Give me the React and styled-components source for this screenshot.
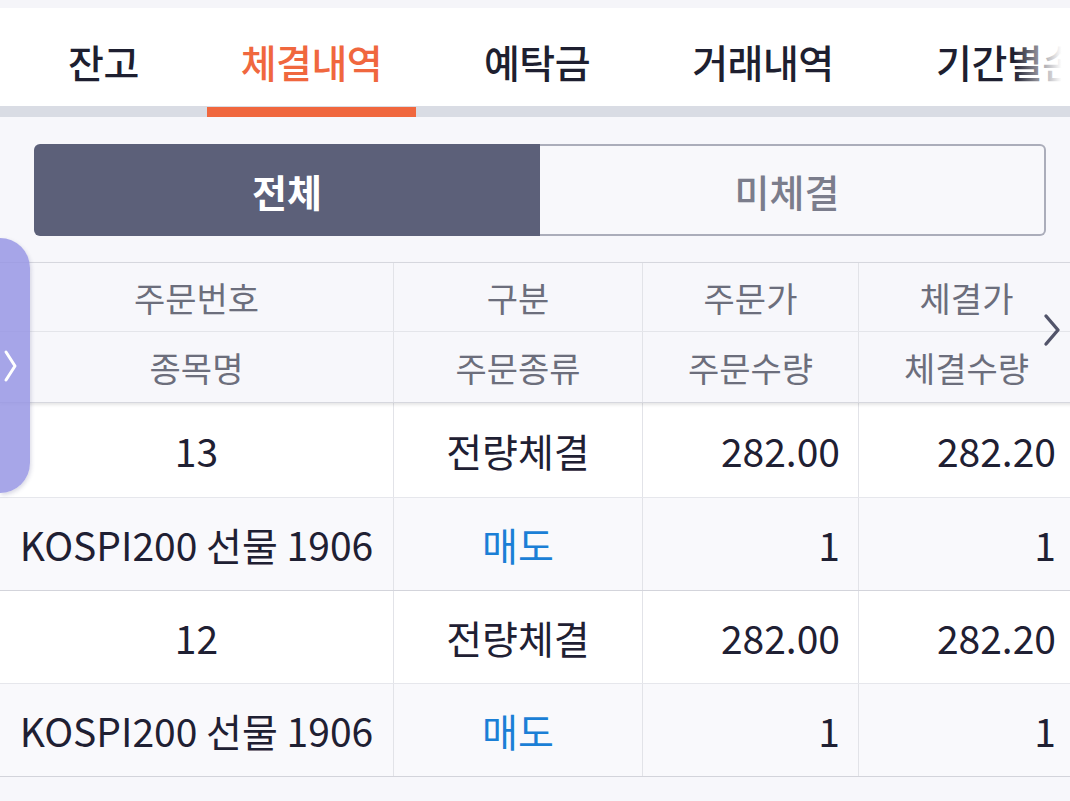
import React from 'react';
import styled, { createGlobalStyle } from 'styled-components';

const GlobalStyle = createGlobalStyle`
  html, body {
    margin: 0;
    padding: 0;
    background: #f7f7fb;
    font-family: "Noto Sans CJK KR", "Noto Sans", sans-serif;
    overflow: hidden;
  }
`;

const tabs = [
  { label: '잔고', width: 207 },
  { label: '체결내역', width: 209, active: true },
  { label: '예탁금', width: 242 },
  { label: '거래내역', width: 210 },
  { label: '기간별손익', width: 260, pad: 68 },
];

const rows = [
  { no: '13', kind: '전량체결', price: '282.00', fill: '282.20', name: 'KOSPI200 선물 1906', side: '매도', qty: '1', fqty: '1' },
  { no: '12', kind: '전량체결', price: '282.00', fill: '282.20', name: 'KOSPI200 선물 1906', side: '매도', qty: '1', fqty: '1' },
];

const COLS = '394px 249px 216px 216px';

const App = () => {
  return (
    <Page>
      <GlobalStyle />
      <TopGap />
      <TabBar>
        {tabs.map((t) => (
          <Tab key={t.label} $width={t.width} $active={t.active} $pad={t.pad}>
            {t.label}
          </Tab>
        ))}
        <Fade />
      </TabBar>
      <TabTrack>
        <Underline />
      </TabTrack>

      <SegmentWrap>
        <Segment>
          <SegBtn $active>전체</SegBtn>
          <SegBtn>미체결</SegBtn>
        </Segment>
      </SegmentWrap>

      <TableArea>
        <SideHandle>
          <svg width="18" height="36" viewBox="0 0 18 36">
            <path d="M6 4 L15 18 L6 32" fill="none" stroke="#fff" strokeWidth="3" strokeLinecap="round" strokeLinejoin="round" />
          </svg>
        </SideHandle>
        <NextArrow>
          <svg width="20" height="36" viewBox="0 0 20 36">
            <path d="M4 4 L16 18 L4 32" fill="none" stroke="#52546a" strokeWidth="3.4" strokeLinecap="round" strokeLinejoin="round" />
          </svg>
        </NextArrow>
        <Table>
          <Head>
            <HeadRow>
              <HeadCell>주문번호</HeadCell>
              <HeadCell>구분</HeadCell>
              <HeadCell>주문가</HeadCell>
              <HeadCell>체결가</HeadCell>
            </HeadRow>
            <HeadRow $last>
              <HeadCell>종목명</HeadCell>
              <HeadCell>주문종류</HeadCell>
              <HeadCell>주문수량</HeadCell>
              <HeadCell>체결수량</HeadCell>
            </HeadRow>
          </Head>
          {rows.map((r, i) => (
            <Group key={i}>
              <Row $bg="#ffffff" $h={i === 0 ? 95 : 93}>
                <Cell>{r.no}</Cell>
                <Cell>{r.kind}</Cell>
                <Cell $align="right">{r.price}</Cell>
                <Cell $align="right">{r.fill}</Cell>
              </Row>
              <Row $bg="#f9f9fc" $h={93} $end>
                <Cell>{r.name}</Cell>
                <Cell $color="#1b7fd6">{r.side}</Cell>
                <Cell $align="right">{r.qty}</Cell>
                <Cell $align="right">{r.fqty}</Cell>
              </Row>
            </Group>
          ))}
        </Table>
      </TableArea>
    </Page>
  );
};

const Page = styled.div`
  width: 1070px;
  height: 801px;
  overflow: hidden;
  background: #f7f7fb;
`;

const TopGap = styled.div`
  height: 8px;
  background: #f5f5f9;
`;

const TabBar = styled.div`
  position: relative;
  display: flex;
  height: 98px;
  background: #ffffff;
  overflow: hidden;
  white-space: nowrap;
`;

const Tab = styled.div`
  flex: 0 0 ${(p) => p.$width}px;
  display: flex;
  align-items: center;
  justify-content: ${(p) => (p.$pad ? 'flex-start' : 'center')};
  padding-left: ${(p) => p.$pad || 0}px;
  padding-top: 8px;
  box-sizing: border-box;
  font-size: 39px;
  font-weight: 500;
  letter-spacing: -0.5px;
  color: ${(p) => (p.$active ? '#f0673e' : '#1e1f30')};
`;

const Fade = styled.div`
  position: absolute;
  top: 0;
  right: 0;
  width: 56px;
  height: 100%;
  background: linear-gradient(to right, rgba(255, 255, 255, 0), #ffffff 85%);
`;

const TabTrack = styled.div`
  height: 11px;
  background: #d9dce4;
  display: flex;
`;

const Underline = styled.div`
  margin-left: 207px;
  width: 209px;
  height: 10px;
  margin-top: 1px;
  background: #f0673e;
`;

const SegmentWrap = styled.div`
  padding: 27px 24px 26px 34px;
`;

const Segment = styled.div`
  display: flex;
  height: 92px;
`;

const SegBtn = styled.div`
  flex: ${(p) => (p.$active ? '0 0 506px' : '1')};
  display: flex;
  align-items: center;
  justify-content: center;
  box-sizing: border-box;
  font-size: 38px;
  font-weight: ${(p) => (p.$active ? 700 : 500)};
  color: ${(p) => (p.$active ? '#ffffff' : '#7b7d8c')};
  background: ${(p) => (p.$active ? '#5c6079' : '#f8f8fb')};
  border: ${(p) => (p.$active ? 'none' : '2px solid #abadba')};
  border-left: none;
  border-radius: ${(p) => (p.$active ? '6px 0 0 6px' : '0 6px 6px 0')};
  padding-right: ${(p) => (p.$active ? 0 : 10)}px;
`;

const TableArea = styled.div`
  position: relative;
`;

const SideHandle = styled.div`
  position: absolute;
  left: 0;
  top: -24px;
  width: 30px;
  height: 255px;
  background: rgba(152, 150, 228, 0.85);
  border-radius: 0 30px 30px 0;
  box-shadow: 1px 2px 4px rgba(60, 60, 120, 0.2);
  z-index: 3;
  display: flex;
  align-items: center;
  justify-content: flex-start;
  box-sizing: border-box;
  padding-bottom: 0;
`;

const NextArrow = styled.div`
  position: absolute;
  right: 8px;
  top: 50px;
  z-index: 3;
`;

const Table = styled.div`
  width: 1075px;
  color: #1f2033;
`;

const Head = styled.div`
  background: #f7f7fb;
  border-top: 1px solid #d6d7de;
  box-shadow: 0 2px 3px rgba(0, 0, 0, 0.1);
  position: relative;
  z-index: 1;
`;

const HeadRow = styled.div`
  display: grid;
  grid-template-columns: ${COLS};
  height: ${(p) => (p.$last ? 70 : 68)}px;
  border-bottom: 1px solid ${(p) => (p.$last ? '#d6d7de' : '#e4e5ea')};
`;

const HeadCell = styled.div`
  display: flex;
  align-items: center;
  justify-content: center;
  font-size: 34px;
  color: #6c6e7c;
  border-right: 1px solid #e2e3e8;
`;

const Group = styled.div``;

const Row = styled.div`
  display: grid;
  grid-template-columns: ${COLS};
  height: ${(p) => p.$h}px;
  background: ${(p) => p.$bg};
  border-bottom: 1px solid ${(p) => (p.$end ? '#d3d4db' : '#e6e7ec')};
  box-sizing: border-box;
`;

const Cell = styled.div`
  display: flex;
  align-items: center;
  justify-content: ${(p) => (p.$align === 'right' ? 'flex-end' : 'center')};
  padding-right: ${(p) => (p.$align === 'right' ? 18 : 0)}px;
  font-size: 39px;
  color: ${(p) => p.$color || '#1f2033'};
  border-right: 1px solid #e2e3e8;
  white-space: nowrap;
`;

export default App;
